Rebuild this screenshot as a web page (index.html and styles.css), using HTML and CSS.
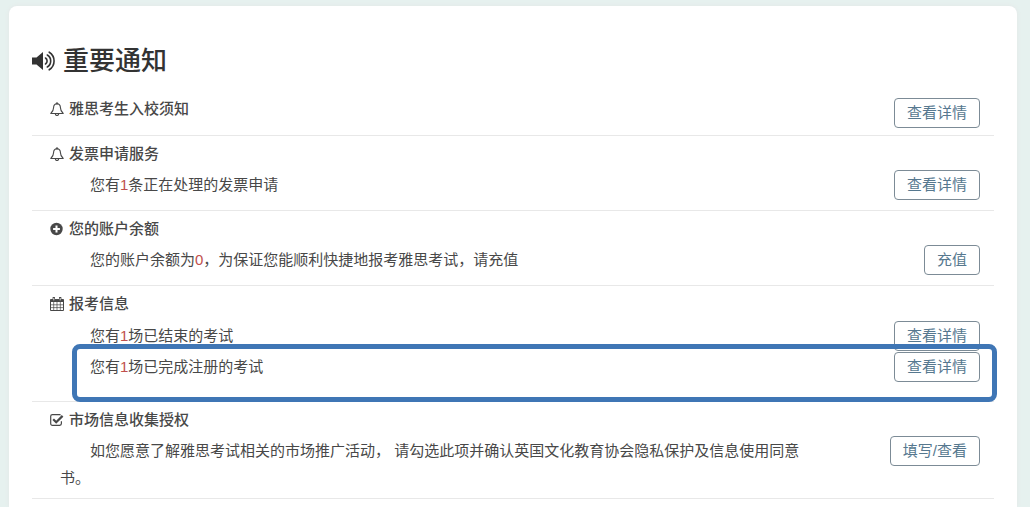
FILE: index.html
```html
<!DOCTYPE html>
<html lang="zh-CN">
	<head>
		<meta charset="utf-8">
		<title>重要通知</title>
		<link rel="stylesheet" href="styles.css">
	</head>
	<body>
		<!-- shared icons -->
		<svg class="defs" width="0" height="0">
			<symbol id="bell" viewBox="0 0 14 14">
				<path d="M7 1.6C4.7 1.9 3.6 3.5 3.6 5.6C3.6 8.5 2.4 10 0.8 11.5H13.2C11.6 10 10.4 8.5 10.4 5.6C10.4 3.5 9.3 1.9 7 1.6Z" fill="none" stroke="currentColor" stroke-width="1.1" stroke-linejoin="round"/>
				<path d="M7 0.5V2M5.3 11.8A1.7 1.7 0 0 0 8.7 11.8" fill="none" stroke="currentColor" stroke-width="1.1" stroke-linecap="round"/>
			</symbol>
		</svg>

		<main class="card">
			<h1 class="title">
				<svg class="icon-sound" viewBox="0 0 24 20">
					<path d="M0 6.5H4.5L11 1V19L4.5 13.5H0Z" fill="currentColor"/>
					<path d="M13.5 7A3.6 3.6 0 0 1 13.5 13M15.3 4A7 7 0 0 1 15.3 16M17.2 1.2A10.4 10.4 0 0 1 17.2 18.8" fill="none" stroke="currentColor" stroke-width="1.6" stroke-linecap="round"/>
				</svg>
				重要通知
			</h1>

			<section class="row row-short">
				<h2><svg class="icon"><use href="#bell"/></svg>雅思考生入校须知</h2>
				<button class="btn" type="button">查看详情</button>
			</section>

			<section class="row">
				<h2><svg class="icon"><use href="#bell"/></svg>发票申请服务</h2>
				<div class="line">
					<p>您有<b>1</b>条正在处理的发票申请</p>
					<button class="btn" type="button">查看详情</button>
				</div>
			</section>

			<section class="row">
				<h2>
					<svg class="icon" viewBox="0 0 14 14">
						<circle cx="6.5" cy="7" r="6.2" fill="currentColor"/>
						<path d="M6.5 3.6V10.4M3.1 7H9.9" stroke="#fff" stroke-width="2"/>
					</svg>您的账户余额
				</h2>
				<div class="line">
					<p>您的账户余额为<b>0</b>，为保证您能顺利快捷地报考雅思考试，请充值</p>
					<button class="btn" type="button">充值</button>
				</div>
			</section>

			<section class="row row-exam">
				<h2>
					<svg class="icon" viewBox="0 0 14 14">
						<path d="M0.5 2.6H13.5V13.5H0.5Z" fill="none" stroke="currentColor"/>
						<path d="M0.5 2.3H13.5V5H0.5Z" fill="currentColor"/>
						<path d="M3.7 5V13.5M7 5V13.5M10.3 5V13.5M0.5 7.8H13.5M0.5 10.6H13.5" stroke="currentColor" stroke-width="0.7"/>
						<path d="M3.8 0.9V3.4M10.2 0.9V3.4" stroke="currentColor" stroke-width="2.4" stroke-linecap="round"/>
						<path d="M3.8 1V3.4M10.2 1V3.4" stroke="#fff" stroke-width="0.8"/>
					</svg>报考信息
				</h2>
				<div class="line">
					<p>您有<b>1</b>场已结束的考试</p>
					<button class="btn" type="button">查看详情</button>
				</div>
				<div class="line line-marked">
					<p>您有<b>1</b>场已完成注册的考试</p>
					<button class="btn" type="button">查看详情</button>
				</div>
			</section>

			<section class="row row-last">
				<h2>
					<svg class="icon" viewBox="0 0 14 14">
						<path d="M11.4 8.2V10.6A1.7 1.7 0 0 1 9.7 12.3H2.4A1.7 1.7 0 0 1 0.7 10.6V3.3A1.7 1.7 0 0 1 2.4 1.6H9.7L10.6 1.8" fill="none" stroke="currentColor" stroke-width="1.2"/>
						<path d="M3.2 6.2L6.2 9.2L12.6 2.9" fill="none" stroke="currentColor" stroke-width="2.2"/>
					</svg>市场信息收集授权
				</h2>
				<div class="line">
					<p>如您愿意了解雅思考试相关的市场推广活动， 请勾选此项并确认英国文化教育协会隐私保护及信息使用同意书。</p>
					<button class="btn" type="button">填写/查看</button>
				</div>
			</section>
		</main>
	</body>
</html>
```
FILE: styles.css
```css
body {
	margin: 0;
	background: #e6f1ef;
	color: #484848;
	font-family: "Liberation Sans", "Noto Sans CJK SC", sans-serif;
	font-size: 15px;
}

.defs {
	position: absolute;
}

.card {
	margin: 6px 13px 0 9px;
	padding: 33px 23px 8px;
	background: #fff;
	border-radius: 8px 8px 0 0;
	box-shadow: 0 0 4px #e4e6e6;
}

.title {
	display: flex;
	align-items: center;
	gap: 7px;
	margin: 0 0 8px;
	color: #333;
	font-size: 26px;
	font-weight: 500;
	line-height: 44px;
}
.icon-sound {
	width: 24px;
	height: 20px;
}

.row {
	padding: 3px 14px 10px 18px;
	border-bottom: 1px solid #e8e8e8;
}
.row h2 {
	display: flex;
	align-items: center;
	gap: 5px;
	margin: 0;
	font-size: 15px;
	font-weight: 500;
	line-height: 30px;
}
.icon {
	width: 14px;
	height: 14px;
}

.row-short {
	display: flex;
	justify-content: space-between;
	align-items: flex-start;
	padding-bottom: 7px;
}
.row-short .btn {
	margin-top: 4px;
}
.row-exam {
	padding-bottom: 19px;
}
.row-exam h2 {
	margin-bottom: 1px;
}
.row-last {
	padding-bottom: 5px;
}

.line {
	position: relative;
	display: flex;
	justify-content: space-between;
	align-items: flex-start;
	padding-left: 10px;
}
.line p {
	flex: 1;
	margin: 0;
	padding: 2px 84px 2px 0;
	line-height: 27px;
	text-indent: 30px;
}
.line b {
	color: #c0504d;
	font-weight: normal;
}
.line .btn {
	margin-top: 1px;
}

/* highlight frame around the registered exam */
.line-marked::after {
	content: "";
	position: absolute;
	top: -7px;
	right: -17px;
	bottom: -20px;
	left: 22px;
	border: 5px solid #3f76b5;
	border-radius: 8px;
	pointer-events: none;
}

.btn {
	height: 30px;
	padding: 0 12px;
	background: #fff;
	border: 1px solid #7c8b96;
	border-radius: 4px;
	color: #56788f;
	font-family: inherit;
	font-size: 15px;
	line-height: 28px;
	cursor: pointer;
}
```
